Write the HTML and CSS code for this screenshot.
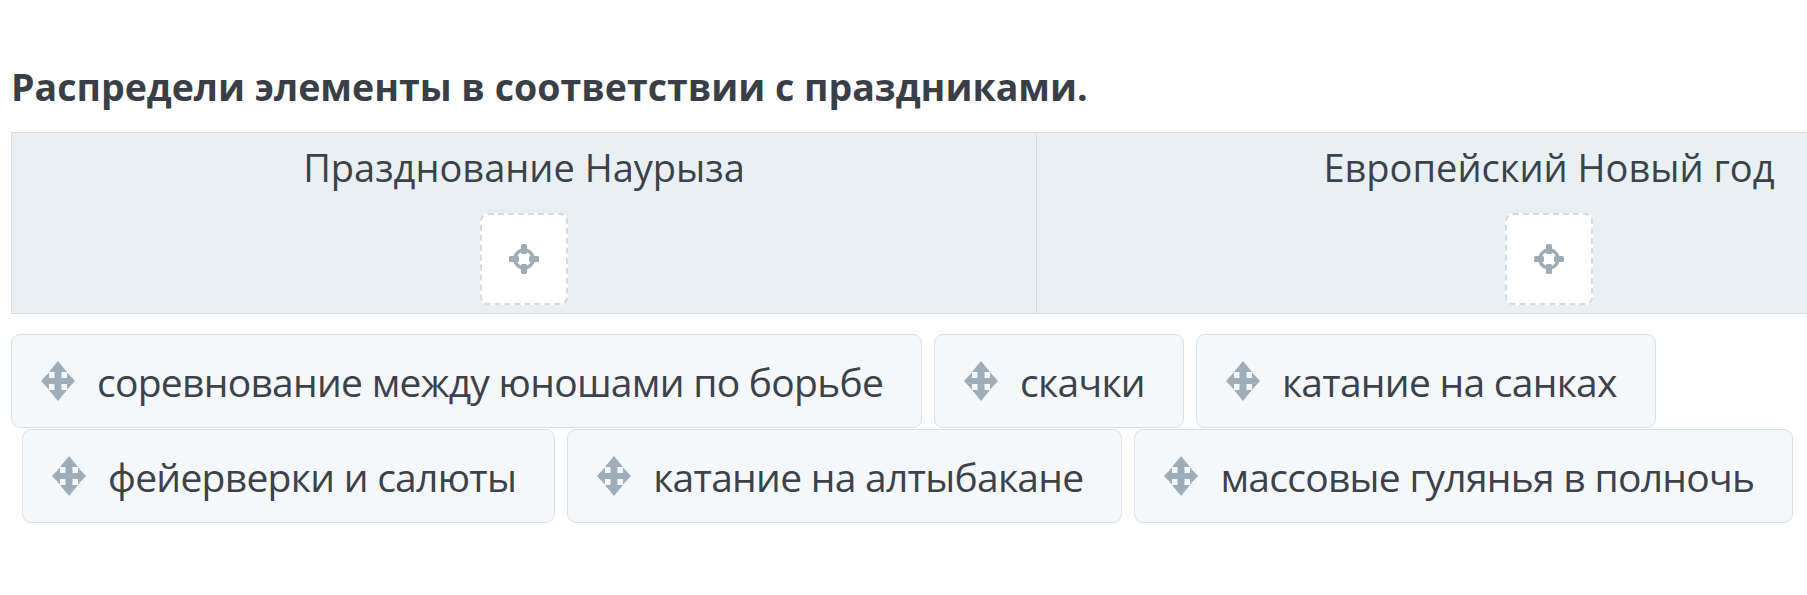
FILE: index.html
```html
<!DOCTYPE html>
<html>

<head>
    <title>Распредели элементы</title>
    <link rel="stylesheet" href="styles.css">
</head>

<body>
    <div class="task">
        <h2 class="task-title">Распредели элементы в соответствии с праздниками.</h2>

        <div class="groups">
            <div class="group">
                <div class="group-name">Празднование Наурыза</div>
                <div class="drop-slot">
                    <svg class="target-icon" viewBox="0 0 32 32" width="32" height="32">
                        <circle cx="16" cy="16" r="9" fill="none" stroke="currentColor" stroke-width="3.5"/>
                        <rect x="13" y="1" width="6" height="10" rx="1.5" fill="currentColor"/>
                        <rect x="13" y="21" width="6" height="10" rx="1.5" fill="currentColor"/>
                        <rect x="1" y="13" width="10" height="6" rx="1.5" fill="currentColor"/>
                        <rect x="21" y="13" width="10" height="6" rx="1.5" fill="currentColor"/>
                    </svg>
                </div>
            </div>
            <div class="group">
                <div class="group-name">Европейский Новый год</div>
                <div class="drop-slot">
                    <svg class="target-icon" viewBox="0 0 32 32" width="32" height="32">
                        <circle cx="16" cy="16" r="9" fill="none" stroke="currentColor" stroke-width="3.5"/>
                        <rect x="13" y="1" width="6" height="10" rx="1.5" fill="currentColor"/>
                        <rect x="13" y="21" width="6" height="10" rx="1.5" fill="currentColor"/>
                        <rect x="1" y="13" width="10" height="6" rx="1.5" fill="currentColor"/>
                        <rect x="21" y="13" width="10" height="6" rx="1.5" fill="currentColor"/>
                    </svg>
                </div>
            </div>
        </div>

        <div class="pool">
            <div class="pool-row">
                <div class="chip"><svg class="move-icon" viewBox="0 0 34 40"><path d="M17 0 L26 11 H20.5 V17 H26 V11.5 L34 20 L26 28.5 V23 H20.5 V29 H26 L17 40 L8 29 H13.5 V23 H8 V28.5 L0 20 L8 11.5 V17 H13.5 V11 H8 Z" fill="currentColor"/></svg>соревнование между юношами по борьбе</div>
                <div class="chip"><svg class="move-icon" viewBox="0 0 34 40"><path d="M17 0 L26 11 H20.5 V17 H26 V11.5 L34 20 L26 28.5 V23 H20.5 V29 H26 L17 40 L8 29 H13.5 V23 H8 V28.5 L0 20 L8 11.5 V17 H13.5 V11 H8 Z" fill="currentColor"/></svg>скачки</div>
                <div class="chip"><svg class="move-icon" viewBox="0 0 34 40"><path d="M17 0 L26 11 H20.5 V17 H26 V11.5 L34 20 L26 28.5 V23 H20.5 V29 H26 L17 40 L8 29 H13.5 V23 H8 V28.5 L0 20 L8 11.5 V17 H13.5 V11 H8 Z" fill="currentColor"/></svg>катание на санках</div>
            </div>
            <div class="pool-row shifted">
                <div class="chip"><svg class="move-icon" viewBox="0 0 34 40"><path d="M17 0 L26 11 H20.5 V17 H26 V11.5 L34 20 L26 28.5 V23 H20.5 V29 H26 L17 40 L8 29 H13.5 V23 H8 V28.5 L0 20 L8 11.5 V17 H13.5 V11 H8 Z" fill="currentColor"/></svg>фейерверки и салюты</div>
                <div class="chip"><svg class="move-icon" viewBox="0 0 34 40"><path d="M17 0 L26 11 H20.5 V17 H26 V11.5 L34 20 L26 28.5 V23 H20.5 V29 H26 L17 40 L8 29 H13.5 V23 H8 V28.5 L0 20 L8 11.5 V17 H13.5 V11 H8 Z" fill="currentColor"/></svg>катание на алтыбакане</div>
                <div class="chip"><svg class="move-icon" viewBox="0 0 34 40"><path d="M17 0 L26 11 H20.5 V17 H26 V11.5 L34 20 L26 28.5 V23 H20.5 V29 H26 L17 40 L8 29 H13.5 V23 H8 V28.5 L0 20 L8 11.5 V17 H13.5 V11 H8 Z" fill="currentColor"/></svg>массовые гулянья в полночь</div>
            </div>
        </div>
    </div>
</body>

</html>
```

FILE: styles.css
```css
html {
    overflow: hidden;
}

body {
    margin: 0;
    font-family: "Open Sans", "Noto Sans", sans-serif;
    color: #3c4249;
    background-color: #fff;
}

.task {
    padding: 62px 0 0 11px;
}

.task-title {
    margin: 0 0 21px 0;
    font-size: 37.5px;
    font-weight: 700;
    line-height: 49px;
    color: #3a3f47;
}

.groups {
    display: flex;
    width: 2048px;
    border: 1px solid #d6dee4;
    background-color: #e9f0f4;
}

.group {
    width: 1024px;
    flex: none;
    padding: 8px 0;
    display: flex;
    flex-direction: column;
    align-items: center;
}

.group + .group {
    border-left: 1px solid #d6dee4;
}

.group-name {
    font-size: 38px;
    line-height: 52px;
    margin-bottom: 20px;
}

.drop-slot {
    width: 88px;
    height: 92px;
    box-sizing: border-box;
    border: 2px dashed #d5dbe0;
    border-radius: 8px;
    background-color: #fff;
    display: flex;
    align-items: center;
    justify-content: center;
}

.target-icon {
    color: #9eacb8;
}

.pool {
    margin-top: 20px;
}

.pool-row {
    display: flex;
    gap: 12px;
    margin-bottom: 1px;
}

.pool-row.shifted {
    margin-left: 11px;
}

.chip {
    display: flex;
    align-items: center;
    gap: 22px;
    height: 94px;
    box-sizing: border-box;
    padding: 0 38px 0 29px;
    border: 1px solid #d9e0e6;
    border-radius: 9px;
    background-color: #f4f8fb;
    font-size: 39px;
    letter-spacing: -0.72px;
    white-space: nowrap;
}

.move-icon {
    width: 34px;
    height: 40px;
    flex: none;
    color: #9dadb9;
}
```
